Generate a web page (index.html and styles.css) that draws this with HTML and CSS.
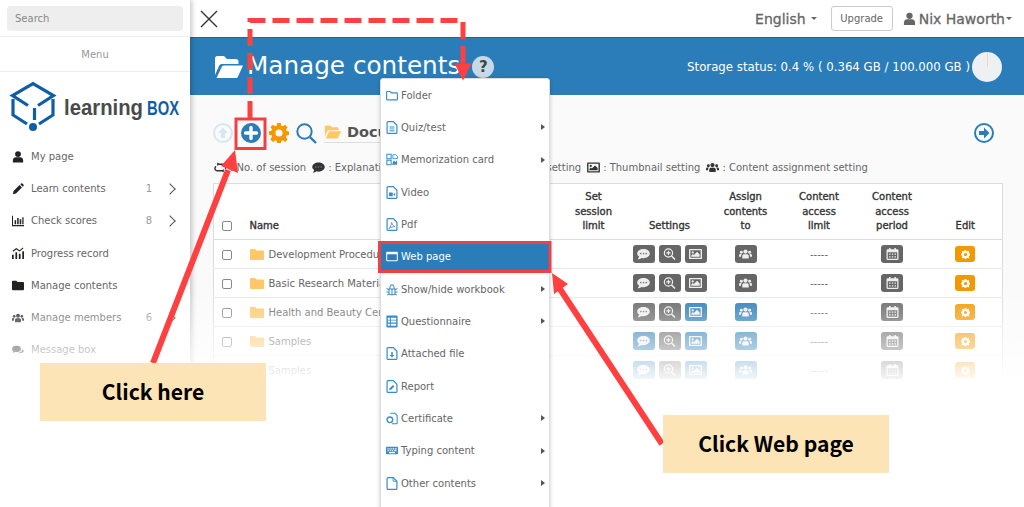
FILE: index.html
```html
<!DOCTYPE html>
<html lang="en">
<head>
<meta charset="utf-8">
<title>Manage contents</title>
<link rel="stylesheet" href="styles.css">
</head>
<body>
<svg class="defs" width="0" height="0">
  <symbol id="user" viewBox="0 0 14 14"><circle cx="7" cy="3.600" r="3.400"/><path d="M1 13.500V11c0-2.400 1.800-3.600 3.400-3.600h5.200C11.200 7.400 13 8.600 13 11v2.500z"/></symbol>
  <symbol id="pencil" viewBox="0 0 14 14"><path d="M1 13l.8-3.600 7-7 2.800 2.800-7 7zM9.700 1.500l1-1a1 1 0 0 1 1.400 0l1.400 1.400a1 1 0 0 1 0 1.400l-1 1z"/></symbol>
  <symbol id="bars" viewBox="0 0 14 14"><path d="M0 1h1.200v10.800H14V13H0z"/><path d="M3 6h1.800v4.800H3zM6 3.500h1.800v7.300H6zM9 5h1.800v5.800H9zM12 2.500h1.500v8.300H12z"/></symbol>
  <symbol id="progress" viewBox="0 0 14 14"><path d="M0 9h2v5H0zM4 6h2v8H4zM8 8h2v6H8zM12 5h2v9h-2z"/><path d="M1 5l4-3 4 2.500L13 1" fill="none" stroke="currentColor" stroke-width="1.200"/></symbol>
  <symbol id="folder" viewBox="0 0 14 12"><path d="M0 2a1 1 0 0 1 1-1h4l1.500 1.500H13a1 1 0 0 1 1 1V11a1 1 0 0 1-1 1H1a1 1 0 0 1-1-1z"/></symbol>
  <symbol id="users" viewBox="0 0 16 12"><circle cx="8" cy="3" r="2.600"/><circle cx="2.900" cy="3.800" r="1.800"/><circle cx="13.100" cy="3.800" r="1.800"/><path d="M4 11.500V8.600C4 7 5 6.200 6.200 6.200h3.600C11 6.200 12 7 12 8.600v2.900zM0 9.500V7.800C0 6.600.8 6 1.800 6h1.600c-.6.600-.9 1.500-.9 2.500v1zM16 9.500V7.800C16 6.600 15.200 6 14.200 6h-1.600c.6.600.9 1.500.9 2.500v1z"/></symbol>
  <symbol id="comment" viewBox="0 0 14 12"><path d="M7 .5c3.700 0 6.800 2.200 6.800 5S10.700 10.500 7 10.500c-.8 0-1.500-.1-2.200-.3C3.800 11 2.400 11.600.8 11.600c.8-.8 1.400-1.800 1.500-2.800C1 7.900.2 6.800.2 5.500.2 2.700 3.300.5 7 .5z"/><circle cx="4" cy="5.500" r=".9" fill="#777"/><circle cx="7" cy="5.500" r=".9" fill="#777"/><circle cx="10" cy="5.500" r=".9" fill="#777"/></symbol>
  <symbol id="comments" viewBox="0 0 16 12"><ellipse cx="6" cy="4.500" rx="5.800" ry="4.200"/><path d="M9 10.300c3.800 0 6.500-.9 6.500-3 0-1-.6-1.800-1.500-2.400-.5 3-3.200 5-7 5.200.6.200 1.300.2 2 .2zM2 7l-1 3 3.500-1.800z"/></symbol>
  <symbol id="session" viewBox="0 0 14 11"><path d="M4 2h6.500a2.500 2.500 0 0 1 2.500 2.500c0 1-.5 1.700-1.200 2.200M10 9H3.500A2.500 2.500 0 0 1 1 6.500c0-1 .5-1.700 1.200-2.200" fill="none" stroke="currentColor" stroke-width="1.500"/><path d="M3.500 0v4L6 2zM10.500 7v4L8 9z"/></symbol>
  <symbol id="zoom" viewBox="0 0 14 14"><circle cx="5.800" cy="5.800" r="4.800" fill="none" stroke="currentColor" stroke-width="1.400"/><path d="M9.400 9.400l4 4" stroke="currentColor" stroke-width="1.800"/><path d="M5.100 3.300h1.400v1.800h1.800v1.400H6.500v1.800H5.100V6.500H3.300V5.100h1.800z"/></symbol>
  <symbol id="pic" viewBox="0 0 14 12"><path fill-rule="evenodd" d="M1 .5h12a1 1 0 0 1 1 1v9a1 1 0 0 1-1 1H1a1 1 0 0 1-1-1v-9a1 1 0 0 1 1-1zM1.500 2v8h11V2z"/><circle cx="4" cy="4.300" r="1.200"/><path d="M2.500 9V7.500L4 6l1.200 1.200L8.700 3.700l2.800 2.800V9z"/></symbol>
  <symbol id="cal" viewBox="0 0 14 14"><path fill-rule="evenodd" d="M3 0h1.800v1.500h4.400V0H11v1.500h1.500A1.500 1.500 0 0 1 14 3v9.500a1.500 1.500 0 0 1-1.500 1.500h-11A1.500 1.500 0 0 1 0 12.500V3a1.500 1.500 0 0 1 1.500-1.500H3zM1.500 5v7.500h11V5zM3 6.300h1.700V8H3zM6.200 6.300h1.700V8H6.200zM9.400 6.300h1.700V8H9.400zM3 9.500h1.700v1.700H3zM6.200 9.500h1.700v1.700H6.200zM9.400 9.500h1.700v1.700H9.400z"/></symbol>
  <symbol id="gear" viewBox="0 0 20 20"><path fill-rule="evenodd" d="M8.200 0h3.600l.5 2.700 1.500.6L16.100 1.700l2.500 2.500-1.600 2.300.6 1.500 2.400.5v3.600l-2.400.5-.6 1.500 1.600 2.300-2.500 2.500-2.300-1.600-1.500.6-.5 2.600H8.200l-.5-2.600-1.500-.6-2.300 1.600-2.500-2.500L3 13.500l-.6-1.500L0 11.800V8.200l2.400-.5.6-1.500L1.400 4.200l2.500-2.500 2.300 1.600 1.500-.6zM10 6.400a3.600 3.600 0 1 0 0 7.200 3.600 3.600 0 0 0 0-7.200z"/></symbol>
  <symbol id="m-folder" viewBox="0 0 14 12"><path d="M.7 10.300V2.200c0-.5.3-.8.8-.8h3.300l1.400 1.500h6.300c.5 0 .8.300.8.800v6.600c0 .5-.3.800-.8.800H1.500c-.5 0-.8-.3-.8-.8z" fill="none" stroke="currentColor" stroke-width="1.300"/></symbol>
  <symbol id="m-doc" viewBox="0 0 12 14"><path d="M1.700.7h5.700l3.900 3.900v7.700c0 .6-.4 1-1 1H1.700c-.6 0-1-.4-1-1V1.700c0-.6.400-1 1-1z" fill="none" stroke="currentColor" stroke-width="1.300"/><path d="M3.300 6h5.400v1H3.300zM3.300 8h5.400v1H3.300zM3.300 10h5.400v1H3.300z"/></symbol>
  <symbol id="m-card" viewBox="0 0 14 14"><path d="M1 1h5v5H1zM1 8h5v5H1z" fill="none" stroke="currentColor" stroke-width="1.200"/><path d="M8 1.500h3.500l2 2V6H8z" fill="none" stroke="currentColor" stroke-width="1"/><path d="M7 13l2-5 2 2 2-2v5z" /></symbol>
  <symbol id="m-video" viewBox="0 0 12 14"><path d="M1.700.7h5.700l3.900 3.900v7.700c0 .6-.4 1-1 1H1.700c-.6 0-1-.4-1-1V1.700c0-.6.400-1 1-1z" fill="none" stroke="currentColor" stroke-width="1.300"/><path d="M2.800 7h4v4h-4zM7.200 9l2.200-1.800v3.600z"/></symbol>
  <symbol id="m-pdf" viewBox="0 0 12 14"><path d="M1.700.7h5.700l3.900 3.900v7.700c0 .6-.4 1-1 1H1.700c-.6 0-1-.4-1-1V1.700c0-.6.400-1 1-1z" fill="none" stroke="currentColor" stroke-width="1.300"/><path d="M5.700 5c1 2.500 1.500 3.500 3.500 4.300-2 0-4.500.5-6.500 2 1.500-1.500 2.500-4 3-6.300z" fill="none" stroke="currentColor" stroke-width=".9"/></symbol>
  <symbol id="m-web" viewBox="0 0 14 12"><path fill-rule="evenodd" d="M1.200.5h11.600c.6 0 1 .4 1 1v9c0 .6-.4 1-1 1H1.200c-.6 0-1-.4-1-1v-9c0-.6.4-1 1-1zM1.400 3.500v6.800h11.200V3.500z"/></symbol>
  <symbol id="m-bug" viewBox="0 0 14 14"><path d="M3.500 6.500h7v4.800c0 1-.8 1.700-1.700 1.700H5.200c-.9 0-1.700-.7-1.700-1.700zM7 6.500V13M4.500 6.500C4.500 3 5.500 1.500 7 1.500S9.500 3 9.500 6.500M3.500 7.500L.8 5.800M10.500 7.500l2.700-1.700M3.500 10H.5M10.500 10h3M3.700 12l-2.200 1.500M10.300 12l2.200 1.500" fill="none" stroke="currentColor" stroke-width="1.200"/></symbol>
  <symbol id="m-table" viewBox="0 0 12 14"><path fill-rule="evenodd" d="M1 .5h10a1 1 0 0 1 1 1v11a1 1 0 0 1-1 1H1a1 1 0 0 1-1-1v-11a1 1 0 0 1 1-1zM1.500 3v2h2.200V3zM4.800 3v2h5.700V3zM1.500 6v2.200h2.200V6zM4.800 6v2.200h5.700V6zM1.500 9.300v2.400h2.200V9.300zM4.800 9.300v2.400h5.700V9.300z"/></symbol>
  <symbol id="m-attach" viewBox="0 0 12 14"><path d="M1.700.7h5.700l3.900 3.900v7.700c0 .6-.4 1-1 1H1.700c-.6 0-1-.4-1-1V1.700c0-.6.400-1 1-1z" fill="none" stroke="currentColor" stroke-width="1.300"/><path d="M5.200 5.500h1.600v3h1.700L6 11.200 3.500 8.500h1.700z"/></symbol>
  <symbol id="m-report" viewBox="0 0 12 14"><path d="M1.700.7h5.700l3.900 3.900v7.700c0 .6-.4 1-1 1H1.700c-.6 0-1-.4-1-1V1.700c0-.6.400-1 1-1z" fill="none" stroke="currentColor" stroke-width="1.300"/><path d="M3 11l.5-2 3.500-3.500 1.500 1.500L5 10.500z"/></symbol>
  <symbol id="m-cert" viewBox="0 0 14 14"><path d="M5 1h5.500L13 3.500v9c0 .4-.3.700-.7.700H7" fill="none" stroke="currentColor" stroke-width="1.200"/><circle cx="4.500" cy="8.500" r="3.300" fill="none" stroke="currentColor" stroke-width="1.600"/></symbol>
  <symbol id="m-key" viewBox="0 0 16 11"><path d="M1 .5h14a1 1 0 0 1 1 1v8a1 1 0 0 1-1 1H1a1 1 0 0 1-1-1v-8a1 1 0 0 1 1-1z"/><path d="M2 2.500h1.500v1.500H2zM4.500 2.500H6v1.500H4.500zM7 2.500h1.500v1.500H7zM9.500 2.500H11v1.500H9.500zM12 2.500h2v1.500h-2zM2 5h2.500v1.500H2zM5.500 5H7v1.500H5.500zM8 5h1.500v1.500H8zM10.500 5H14v1.500h-3.500zM4 7.500h8V9H4z" fill="#fff"/></symbol>
  <symbol id="m-other" viewBox="0 0 12 14"><path d="M1.700.7h5.700l3.900 3.900v7.700c0 .6-.4 1-1 1H1.700c-.6 0-1-.4-1-1V1.700c0-.6.400-1 1-1z" fill="none" stroke="currentColor" stroke-width="1.300"/><path d="M7.200 1v3.600h3.800" fill="none" stroke="currentColor"/></symbol>
</svg>

<div class="page">
  <aside class="sidebar">
    <div class="search-wrap"><div class="search">Search</div></div>
    <div class="menu-title">Menu</div>
    <div class="logo">
      <svg class="logo-svg" viewBox="0 72 190 68" width="190" height="68">
        <g fill="none" stroke="#0f5da5" stroke-width="3.200">
          <path d="M28 105.500L12.500 95.500 33 83.500 53.500 95.500 38 105.500"/>
          <path d="M13 99v16l14 9M53 99v16l-14 9M34.500 108v12"/>
        </g>
        <circle cx="33" cy="127" r="4" fill="#0f5da5"/>
        <text class="logo-word" x="64" y="115" textLength="79" lengthAdjust="spacingAndGlyphs">learning</text>
        <text class="logo-box" x="147" y="115" textLength="32" lengthAdjust="spacingAndGlyphs">BOX</text>
      </svg>
    </div>
    <nav class="nav">
      <div class="nav-row"><svg class="nav-ic"><use href="#user"/></svg><span class="nav-label">My page</span></div>
      <div class="nav-row"><svg class="nav-ic"><use href="#pencil"/></svg><span class="nav-label">Learn contents</span><span class="nav-count">1</span><span class="chev"></span></div>
      <div class="nav-row"><svg class="nav-ic"><use href="#bars"/></svg><span class="nav-label">Check scores</span><span class="nav-count">8</span><span class="chev"></span></div>
      <div class="nav-row"><svg class="nav-ic"><use href="#progress"/></svg><span class="nav-label">Progress record</span></div>
      <div class="nav-row"><svg class="nav-ic"><use href="#folder"/></svg><span class="nav-label">Manage contents</span></div>
      <div class="nav-row"><svg class="nav-ic"><use href="#users"/></svg><span class="nav-label">Manage members</span><span class="nav-count">6</span><span class="chev"></span></div>
      <div class="nav-row"><svg class="nav-ic"><use href="#comments"/></svg><span class="nav-label">Message box</span></div>
    </nav>
  </aside>

  <main class="main">
    <header class="topbar">
      <svg class="close" viewBox="0 0 18 18" width="18" height="18"><path d="M1 1l16 16M17 1L1 17" stroke="#333" stroke-width="1.400" fill="none"/></svg>
      <span class="lang">English<i class="caret"></i></span>
      <span class="upgrade">Upgrade</span>
      <span class="account"><svg class="acc-ic"><use href="#user"/></svg>Nix Haworth<i class="caret tight"></i></span>
    </header>
    <section class="banner">
      <svg class="banner-folder" viewBox="0 0 30 24" width="30" height="24"><path d="M1 20V3.500C1 2 2 1 3.500 1H10l3 3h9c1.500 0 2.500 1 2.500 2.500V9H8c-1.500 0-2.500.7-3 2z" fill="#fff"/><path d="M2.500 23l5.500-11.500c.4-.7 1-1 1.800-1H29l-5 11c-.4 1-1.200 1.500-2.200 1.500z" fill="#fff"/></svg>
      <h1 class="banner-title">Manage contents</h1>
      <span class="help">?</span>
      <span class="storage">Storage status: 0.4 % ( 0.364 GB / 100.000 GB )</span>
      <span class="pie"><i class="pie-slice"></i></span>
    </section>
    <section class="content">
      <div class="toolbar">
        <svg class="tb-ic faint" viewBox="0 0 20 20"><circle cx="10" cy="10" r="9" fill="none" stroke="#d6e6f2" stroke-width="2"/><path d="M10 4.500l5 5.500h-3v5H8v-5H5z" fill="#d6e6f2"/></svg>
        <svg class="tb-ic plus" viewBox="0 0 20 20"><circle cx="10" cy="10" r="10" fill="#2a7db8"/><path d="M10 4.500v11M4.500 10h11" stroke="#fff" stroke-width="3.400" stroke-linecap="round"/></svg>
        <svg class="tb-ic gear"><use href="#gear"/></svg>
        <svg class="tb-ic mag" viewBox="0 0 21 21"><circle cx="8.500" cy="8.500" r="7.200" fill="none" stroke="#2a7db8" stroke-width="2"/><path d="M13.800 13.800l6.200 6.200" stroke="#2a7db8" stroke-width="2.400"/></svg>
        <span class="crumb">
          <svg viewBox="0 0 30 24" width="18" height="14"><path d="M1 20V3.500C1 2 2 1 3.500 1H10l3 3h9c1.500 0 2.500 1 2.500 2.500V9H8c-1.500 0-2.500.7-3 2z" fill="#fdc76a"/><path d="M2.500 23l5.500-11.500c.4-.7 1-1 1.800-1H29l-5 11c-.4 1-1.200 1.500-2.200 1.500z" fill="#fdc76a"/></svg>
          <b>Documents</b>
        </span>
        <svg class="tb-ic next" viewBox="0 0 20 20"><circle cx="10" cy="10" r="9" fill="none" stroke="#2a7db8" stroke-width="2"/><path d="M10 4.500L15.500 10 10 15.500V12H5V8h5z" fill="#2a7db8"/></svg>
      </div>
      <div class="legend">
        <svg class="lg-ic"><use href="#session"/></svg><span>: No. of session</span>
        <svg class="lg-ic"><use href="#comment"/></svg><span>: Explanation setting</span>
        <svg class="lg-ic"><use href="#zoom"/></svg><span>: Enlarged display setting</span>
        <svg class="lg-ic"><use href="#pic"/></svg><span>: Thumbnail setting</span>
        <svg class="lg-ic"><use href="#users"/></svg><span>: Content assignment setting</span>
      </div>
      <table class="grid">
        <colgroup><col class="c-check"><col class="c-name"><col class="c-set"><col class="c-settings"><col class="c-assign"><col class="c-limit"><col class="c-period"><col class="c-edit"></colgroup>
        <thead>
          <tr><th><i class="check"></i></th><th class="left">Name</th><th>Set<br>session<br>limit</th><th>Settings</th><th>Assign<br>contents<br>to</th><th>Content<br>access<br>limit</th><th>Content<br>access<br>period</th><th>Edit</th></tr>
        </thead>
        <tbody>
          <tr><td><i class="check"></i></td><td class="left"><svg class="row-folder"><use href="#folder"/></svg>Development Procedures</td><td></td>
            <td><div class="btns"><span class="btn"><svg><use href="#comment"/></svg></span><span class="btn"><svg><use href="#zoom"/></svg></span><span class="btn"><svg><use href="#pic"/></svg></span></div></td>
            <td><div class="btns"><span class="btn"><svg><use href="#users"/></svg></span></div></td><td>-----</td>
            <td><div class="btns"><span class="btn"><svg><use href="#cal"/></svg></span></div></td><td><div class="btns"><span class="btn edit"><svg><use href="#gear"/></svg></span></div></td></tr>
          <tr><td><i class="check"></i></td><td class="left"><svg class="row-folder"><use href="#folder"/></svg>Basic Research Materials</td><td></td>
            <td><div class="btns"><span class="btn"><svg><use href="#comment"/></svg></span><span class="btn"><svg><use href="#zoom"/></svg></span><span class="btn"><svg><use href="#pic"/></svg></span></div></td>
            <td><div class="btns"><span class="btn"><svg><use href="#users"/></svg></span></div></td><td>-----</td>
            <td><div class="btns"><span class="btn"><svg><use href="#cal"/></svg></span></div></td><td><div class="btns"><span class="btn edit"><svg><use href="#gear"/></svg></span></div></td></tr>
          <tr><td><i class="check"></i></td><td class="left"><svg class="row-folder"><use href="#folder"/></svg>Health and Beauty Center</td><td></td>
            <td><div class="btns"><span class="btn"><svg><use href="#comment"/></svg></span><span class="btn"><svg><use href="#zoom"/></svg></span><span class="btn blue"><svg><use href="#pic"/></svg></span></div></td>
            <td><div class="btns"><span class="btn blue"><svg><use href="#users"/></svg></span></div></td><td>-----</td>
            <td><div class="btns"><span class="btn"><svg><use href="#cal"/></svg></span></div></td><td><div class="btns"><span class="btn edit"><svg><use href="#gear"/></svg></span></div></td></tr>
          <tr><td><i class="check"></i></td><td class="left"><svg class="row-folder"><use href="#folder"/></svg>Samples</td><td></td>
            <td><div class="btns"><span class="btn blue"><svg><use href="#comment"/></svg></span><span class="btn"><svg><use href="#zoom"/></svg></span><span class="btn blue"><svg><use href="#pic"/></svg></span></div></td>
            <td><div class="btns"><span class="btn blue"><svg><use href="#users"/></svg></span></div></td><td>-----</td>
            <td><div class="btns"><span class="btn"><svg><use href="#cal"/></svg></span></div></td><td><div class="btns"><span class="btn edit"><svg><use href="#gear"/></svg></span></div></td></tr>
          <tr><td><i class="check"></i></td><td class="left"><svg class="row-folder"><use href="#folder"/></svg>Samples</td><td></td>
            <td><div class="btns"><span class="btn blue"><svg><use href="#comment"/></svg></span><span class="btn"><svg><use href="#zoom"/></svg></span><span class="btn blue"><svg><use href="#pic"/></svg></span></div></td>
            <td><div class="btns"><span class="btn blue"><svg><use href="#users"/></svg></span></div></td><td>-----</td>
            <td><div class="btns"><span class="btn"><svg><use href="#cal"/></svg></span></div></td><td><div class="btns"><span class="btn edit"><svg><use href="#gear"/></svg></span></div></td></tr>
        </tbody>
      </table>
    </section>
  </main>

  <div class="fade"></div>

  <ul class="dropdown">
    <li><svg class="dd-ic"><use href="#m-folder"/></svg>Folder</li>
    <li class="sub"><svg class="dd-ic"><use href="#m-doc"/></svg>Quiz/test</li>
    <li class="sub"><svg class="dd-ic"><use href="#m-card"/></svg>Memorization card</li>
    <li><svg class="dd-ic"><use href="#m-video"/></svg>Video</li>
    <li><svg class="dd-ic"><use href="#m-pdf"/></svg>Pdf</li>
    <li class="active"><svg class="dd-ic"><use href="#m-web"/></svg>Web page</li>
    <li class="sub"><svg class="dd-ic"><use href="#m-bug"/></svg>Show/hide workbook</li>
    <li class="sub"><svg class="dd-ic"><use href="#m-table"/></svg>Questionnaire</li>
    <li><svg class="dd-ic"><use href="#m-attach"/></svg>Attached file</li>
    <li><svg class="dd-ic"><use href="#m-report"/></svg>Report</li>
    <li class="sub"><svg class="dd-ic"><use href="#m-cert"/></svg>Certificate</li>
    <li class="sub"><svg class="dd-ic"><use href="#m-key"/></svg>Typing content</li>
    <li class="sub"><svg class="dd-ic"><use href="#m-other"/></svg>Other contents</li>
  </ul>

  <svg class="marks" viewBox="0 0 1024 507" width="1024" height="507">
    <path class="dash" d="M250 118V20.500H463V65"/>
    <path class="tip" d="M463 80.500l-8.500-17h17z"/>
    <rect class="box" x="236" y="119" width="29" height="29.500"/>
    <rect class="box" x="379.500" y="242.500" width="170.500" height="29"/>
    <path class="shaft" d="M153 363L228 170"/>
    <path class="tip" d="M235 150l3 23-17-7z"/>
    <path class="shaft" d="M662 444L560 289"/>
    <path class="tip" d="M552 273l16 11-14 10z"/>
  </svg>

  <div class="note note-here">Click here</div>
  <div class="note note-web">Click Web page</div>
</div>
</body>
</html>
```

FILE: styles.css
```css
* { box-sizing: border-box; }
html, body { margin: 0; padding: 0; background: #fff; }
body { width: 1024px; height: 507px; overflow: hidden; font-family: "DejaVu Sans", sans-serif; font-size: 10px; color: #666; }
.defs { position: absolute; }
.page { position: relative; width: 1024px; height: 507px; overflow: hidden; display: flex; }

/* sidebar */
.sidebar { width: 190px; flex: none; height: 507px; background: #fff; box-shadow: 2px 0 5px rgba(0,0,0,.22); position: relative; z-index: 2; }
.search-wrap { height: 37px; padding: 6px 7px; border-bottom: 1px solid #eee; }
.search { height: 25px; background: #eee; border-radius: 4px; padding: 0 8px; line-height: 26px; color: #888; }
.menu-title { height: 35px; line-height: 36px; text-align: center; color: #999; border-bottom: 1px solid #eee; }
.logo { height: 68.500px; }
.logo-svg { display: block; }
.logo-word { font-family: "Liberation Sans", sans-serif; font-size: 21.500px; font-weight: 700; fill: #4a4a4a; }
.logo-box { font-family: "Liberation Sans", sans-serif; font-size: 20px; font-weight: 700; fill: #0f5da5; }
.nav-row { height: 32.200px; display: flex; align-items: center; padding-left: 12px; color: #666; }
.nav-ic { width: 12px; height: 12px; margin-right: 7px; fill: #222; color: #222; flex: none; }
.nav-label { flex: 1; }
.nav-count { color: #999; margin-right: 14px; }
.chev { width: 8px; height: 8px; border-top: 1.500px solid #555; border-right: 1.500px solid #555; transform: rotate(45deg); margin-right: 16px; }

/* main */
.main { flex: 1; min-width: 0; background: #fafafa; }
.topbar { height: 37px; background: #fff; display: flex; align-items: center; padding: 0 12px 0 10px; }
.close { margin-right: auto; }
.lang, .account { font-size: 14px; color: #666; -webkit-text-stroke: .3px #666; white-space: nowrap; display: flex; align-items: center; }
.lang { margin-right: 14px; }
.caret { display: inline-block; border: 3px solid transparent; border-top-color: #666; border-bottom: 0; margin-left: 5px; }
.caret.tight { margin-left: 1px; }
.upgrade { width: 62px; height: 25px; border: 1px solid #ccc; border-radius: 3px; background: #fff; text-align: center; line-height: 23px; font-size: 10px; margin-right: 10px; }
.acc-ic { width: 13px; height: 14px; fill: #666; margin-right: 3px; }
.banner { height: 58px; background: #2a7db8; border-top: 1px solid #1f6498; display: flex; align-items: center; padding: 0 22px 0 24px; color: #fff; }
.banner-title { margin: 0 0 3px 3px; font-size: 24.700px; font-weight: 400; white-space: nowrap; }
.help { width: 22px; height: 22px; border-radius: 50%; background: #c5d9e9; color: #444; font-weight: 700; font-size: 15px; text-align: center; line-height: 22px; margin: 1px auto 0 12px; }
.storage { font-size: 11.750px; white-space: nowrap; }
.pie { width: 30px; height: 30px; border-radius: 50%; background: #eef1f3; margin-left: 2px; display: flex; justify-content: center; }
.pie-slice { width: 1px; height: 15px; background: #f5d9a8; }

.content { padding: 0 22px 0 23px; }
.toolbar { height: 56px; display: flex; align-items: center; padding-top: 20px; }
.tb-ic { width: 20px; height: 20px; flex: none; }
.faint { margin-right: 8px; }
.plus { margin-right: 8px; }
.gear { fill: #f39800; margin-right: 7px; }
.mag { width: 21px; height: 21px; margin-right: 7px; }
.crumb { display: flex; align-items: center; gap: 5px; color: #555; font-size: 14.500px; border-bottom: 1px solid #ddd; padding-bottom: 2px; }
.next { margin-left: auto; margin-right: 8px; }
.legend { height: 32px; display: flex; align-items: center; gap: 3px; padding-left: 1px; white-space: nowrap; }
.legend span { margin-right: 3px; }
.lg-ic { width: 13px; height: 11px; fill: #333; color: #333; flex: none; }

.grid { width: 789px; table-layout: fixed; border-collapse: collapse; background: #fff; border: 1px solid #ddd; }
.c-check { width: 27px; }
.c-name { width: 316px; }
.c-set { width: 74px; }
.c-settings { width: 78px; }
.c-assign { width: 74px; }
.c-limit { width: 73px; }
.c-period { width: 73px; }
.c-edit { width: 74px; }
.grid th { height: 56px; padding: 0 0 5px; vertical-align: bottom; text-align: center; line-height: 14.700px; font-weight: 400; color: #333; -webkit-text-stroke: .35px #333; border-bottom: 1px solid #ddd; }
.grid td { height: 29.100px; padding: 0; text-align: center; border-bottom: 1px solid #e8e8e8; }
.grid .left { text-align: left; padding-left: 9px; white-space: nowrap; overflow: hidden; }
.check { display: inline-block; width: 10px; height: 10px; border: 1px solid #888; border-radius: 2px; background: #fff; vertical-align: middle; margin-left: -1px; }
.row-folder { width: 14px; height: 12px; fill: #fdc76a; margin-right: 5px; vertical-align: -2px; }
.btns { display: flex; justify-content: center; align-items: center; gap: 4px; }
.btn { width: 22px; height: 18px; border-radius: 3px; background: #666; display: flex; align-items: center; justify-content: center; }
.btn svg { width: 13px; height: 12px; fill: #eee; color: #eee; }
.btn.blue { background: #2a7db8; }
.btn.edit { width: 20px; height: 16px; background: #f39800; }
.btn.edit svg { width: 9px; height: 9px; fill: #fff; }

/* fade over lower page */
.fade { position: absolute; left: 0; right: 0; top: 290px; height: 100px; background: linear-gradient(to bottom, rgba(255,255,255,0) 0%, rgba(255,255,255,1) 95%); z-index: 3; pointer-events: none; }
.fade::after { content: ""; position: absolute; left: 0; right: 0; top: 100px; height: 120px; background: #fff; }

/* dropdown */
.dropdown { position: absolute; left: 380px; top: 78px; width: 170px; height: 440px; margin: 0; padding: 0; list-style: none; background: #fff; border: 1px solid #ddd; border-radius: 3px; box-shadow: 0 1px 4px rgba(0,0,0,.2); z-index: 4; }
.dropdown li { height: 32.330px; display: flex; align-items: center; padding-left: 5px; color: #666; position: relative; white-space: nowrap; }
.dd-ic { width: 12px; height: 13px; margin-right: 3px; fill: #3a8cc8; color: #3a8cc8; flex: none; }
.dropdown li.active { background: #2a7db8; color: #fff; }
.dropdown li.active .dd-ic { fill: #fff; color: #fff; }
.dropdown li.sub::after { content: ""; position: absolute; right: 4px; top: 50%; margin-top: -3px; border: 3px solid transparent; border-left: 4px solid #555; border-right: 0; }

/* annotations */
.marks { position: absolute; left: 0; top: 0; z-index: 5; pointer-events: none; }
.dash { fill: none; stroke: #ff4040; stroke-width: 5; stroke-dasharray: 17 7; }
.tip { fill: #ff4040; }
.box { fill: none; stroke: #f24040; stroke-width: 3; }
.shaft { fill: none; stroke: #ff4040; stroke-width: 6; }
.note { position: absolute; z-index: 6; background: #fce4b6; width: 226px; height: 58px; padding-bottom: 2px; display: flex; align-items: center; justify-content: center; color: #000; font-family: "Noto Sans CJK JP", "Noto Sans", sans-serif; font-size: 21.100px; font-weight: 700; }
.note-here { left: 40px; top: 363px; }
.note-web { left: 663px; top: 415px; }
```
